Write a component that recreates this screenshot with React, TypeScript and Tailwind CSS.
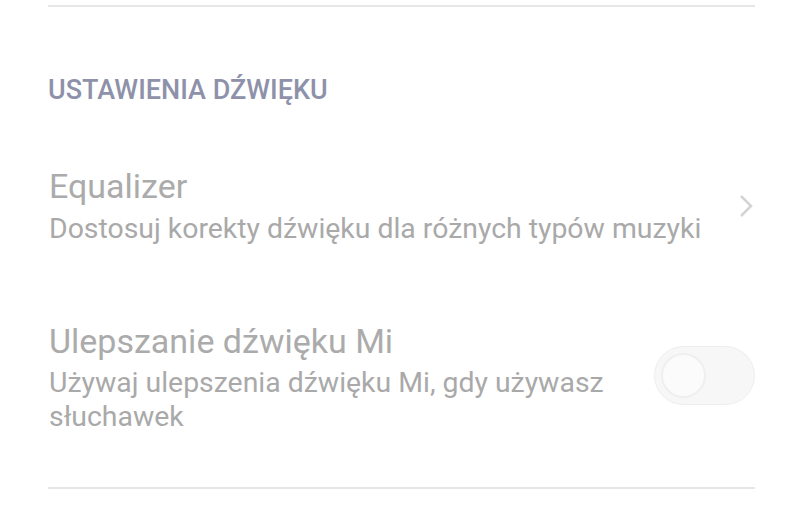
export default function App() {
  return (
    <div
      className="w-[803px] h-[520px] bg-white overflow-hidden"
      style={{ fontFamily: 'Roboto, "Noto Sans", sans-serif' }}
    >
      <div className="mx-[48px] pt-[5px]">
        <div className="h-[2px] bg-[#e6e6e6]" />

        <div className="pt-[68px] pb-[61px]">
          <h2 className="text-[27px] leading-[30px] font-medium text-[#8e91aa]">
            USTAWIENIA DŹWIĘKU
          </h2>
        </div>

        <div className="flex items-center justify-between">
          <div className="pl-[1px]">
            <p className="text-[34px] leading-[40px] text-[#ababab]">Equalizer</p>
            <p className="text-[28.4px] leading-[34px] text-[#a9a9a9] mt-[6px]">
              Dostosuj korekty dźwięku dla różnych typów muzyki
            </p>
          </div>
          <svg width="16" height="26" viewBox="0 0 16 26" className="mr-[1px]">
            <path d="M3 3 L13 13 L3 23" fill="none" stroke="#d4d4d4" strokeWidth="2.5" />
          </svg>
        </div>

        <div className="flex items-center justify-between mt-[75px]">
          <div className="pl-[1px]">
            <p className="text-[34px] leading-[40px] text-[#ababab]">Ulepszanie dźwięku Mi</p>
            <p className="text-[28.4px] leading-[34px] text-[#a9a9a9] mt-[5px] w-[570px]">
              Używaj ulepszenia dźwięku Mi, gdy używasz słuchawek
            </p>
          </div>
          <div className="w-[101px] h-[59px] mb-[4px] rounded-full bg-[#f7f7f7] border border-[#eeeeee] flex items-center pl-[6px]">
            <div className="w-[45px] h-[45px] rounded-full bg-[#fbfbfb] border-2 border-[#efefef]" />
          </div>
        </div>

        <div className="h-[2px] bg-[#e6e6e6] mt-[53px]" />
      </div>
    </div>
  );
}
